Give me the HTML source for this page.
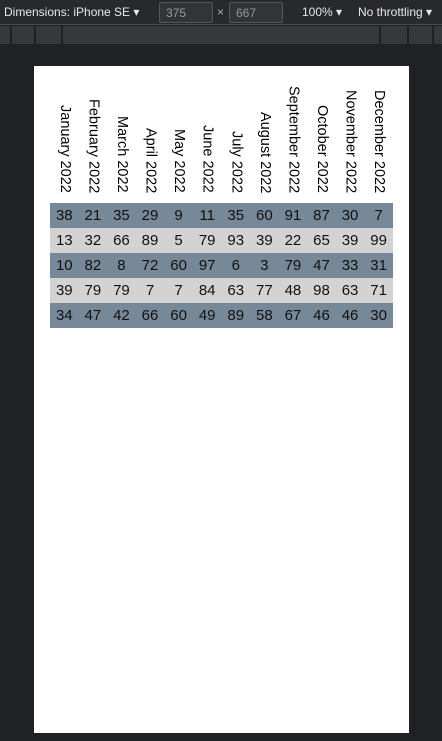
<!DOCTYPE html>
<html><head><meta charset="utf-8"><style>
*{margin:0;padding:0;box-sizing:border-box}
body{width:442px;height:741px;background:#202124;position:relative;overflow:hidden;font-family:"Liberation Sans",Arial,sans-serif}
.bar{position:absolute;left:0;top:0;width:442px;height:25px;background:#28292c;border-bottom:1px solid #4a4b4f;color:#e8e8e8;font-size:12px}
.bar span{position:absolute;top:5px}
.inp{position:absolute;top:2px;height:21px;border:1px solid #555;background:#333437;color:#999;font-size:12px;padding:3px 6px;border-radius:2px}
.strip{position:absolute;left:0;top:26px;width:442px;height:18px;background:#37383b}
.strip i{position:absolute;top:0;width:2px;height:18px;background:#202124}
.page{position:absolute;left:34px;top:66px;width:375px;height:667px;background:#fff}
.tbl{position:absolute;left:16px;top:14px;width:343px;display:flex}
.col{flex:1;text-align:center}
.h{height:123px;display:flex;justify-content:center;align-items:flex-end;padding-bottom:10px}
.h div{writing-mode:vertical-rl;font-size:14.5px;color:#000;white-space:nowrap;line-height:17px}
.c{height:25px;line-height:25px;font-size:15px;color:#111}
.c:nth-child(2),.c:nth-child(4),.c:nth-child(6){background:#778899}
.c:nth-child(3),.c:nth-child(5){background:#d3d3d3}
</style></head><body>
<div class="bar"><span style="left:4px">Dimensions: iPhone SE ▾</span>
<div class="inp" style="left:159px;width:54px">375</div><span style="left:217px;color:#aaa">×</span>
<div class="inp" style="left:229px;width:54px">667</div>
<span style="left:302px">100% ▾</span><span style="left:358px">No throttling ▾</span></div>
<div class="strip"><i style="left:10px"></i><i style="left:34px"></i><i style="left:61px"></i><i style="left:379px"></i><i style="left:407px"></i><i style="left:432px"></i></div>
<div class="page"><div class="tbl">
<div class="col"><div class="h"><div>January 2022</div></div><div class="c">38</div><div class="c">13</div><div class="c">10</div><div class="c">39</div><div class="c">34</div></div>
<div class="col"><div class="h"><div>February 2022</div></div><div class="c">21</div><div class="c">32</div><div class="c">82</div><div class="c">79</div><div class="c">47</div></div>
<div class="col"><div class="h"><div>March 2022</div></div><div class="c">35</div><div class="c">66</div><div class="c">8</div><div class="c">79</div><div class="c">42</div></div>
<div class="col"><div class="h"><div>April 2022</div></div><div class="c">29</div><div class="c">89</div><div class="c">72</div><div class="c">7</div><div class="c">66</div></div>
<div class="col"><div class="h"><div>May 2022</div></div><div class="c">9</div><div class="c">5</div><div class="c">60</div><div class="c">7</div><div class="c">60</div></div>
<div class="col"><div class="h"><div>June 2022</div></div><div class="c">11</div><div class="c">79</div><div class="c">97</div><div class="c">84</div><div class="c">49</div></div>
<div class="col"><div class="h"><div>July 2022</div></div><div class="c">35</div><div class="c">93</div><div class="c">6</div><div class="c">63</div><div class="c">89</div></div>
<div class="col"><div class="h"><div>August 2022</div></div><div class="c">60</div><div class="c">39</div><div class="c">3</div><div class="c">77</div><div class="c">58</div></div>
<div class="col"><div class="h"><div>September 2022</div></div><div class="c">91</div><div class="c">22</div><div class="c">79</div><div class="c">48</div><div class="c">67</div></div>
<div class="col"><div class="h"><div>October 2022</div></div><div class="c">87</div><div class="c">65</div><div class="c">47</div><div class="c">98</div><div class="c">46</div></div>
<div class="col"><div class="h"><div>November 2022</div></div><div class="c">30</div><div class="c">39</div><div class="c">33</div><div class="c">63</div><div class="c">46</div></div>
<div class="col"><div class="h"><div>December 2022</div></div><div class="c">7</div><div class="c">99</div><div class="c">31</div><div class="c">71</div><div class="c">30</div></div>
</div></div>
</body></html>
